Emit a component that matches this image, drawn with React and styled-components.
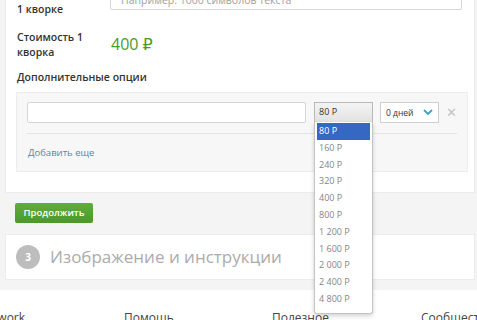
import React from 'react'
import styled, { createGlobalStyle } from 'styled-components'

const GlobalStyle = createGlobalStyle`
  html, body {
    margin: 0;
    padding: 0;
    background: #f4f4f4;
    font-family: "Open Sans", "DejaVu Sans", sans-serif;
    overflow: hidden;
  }
`

const Page = styled.div`
  width: 477px;
  height: 320px;
  overflow: hidden;
`

const Card = styled.section`
  background: #ffffff;
  margin: 0 2px 0 5px;
  border: 1px solid #ececec;
  padding: ${p => p.pad || '0 6px 20px 10px'};
  margin-top: ${p => p.top || 0}px;
`

const Row = styled.div`
  display: grid;
  grid-template-columns: 94px 1fr;
  align-items: start;
  margin-top: ${p => p.top || 0}px;
  padding-right: 6px;
`

const Label = styled.div`
  font-size: 10.5px;
  line-height: 15px;
  font-weight: 600;
  color: #333;
  padding-left: 1px;
`

const TextField = styled.input`
  box-sizing: border-box;
  height: ${p => p.h || 26}px;
  width: 100%;
  border: 1px solid #d6d6d6;
  border-radius: 2px;
  background: #fff;
  font-family: inherit;
  font-size: 10.5px;
  padding: 0 10px;
  margin-top: ${p => p.mt || 0}px;
  &::placeholder { color: #a0a0a0; }
`

const Price = styled.div`
  font-size: 16px;
  line-height: 20px;
  color: #4a9a2a;
  padding-top: 4px;
  padding-left: 1px;
`

const SectionTitle = styled(Label)`
  margin-top: 10px;
`

const OptionsBox = styled.div`
  margin-top: 7px;
  background: #f7f7f7;
  border: 1px solid #ececec;
  padding: 9px 10px 11px 10px;
`

const OptionLine = styled.div`
  display: flex;
  align-items: flex-start;
  gap: 8px;
  padding-bottom: 10px;
  border-bottom: 1px solid #e4e4e4;
`

const NameField = styled(TextField)`
  width: 279px;
  flex: none;
`

const SelectWrap = styled.div`
  position: relative;
  flex: none;
`

const PriceSelect = styled.div`
  box-sizing: border-box;
  width: 59px;
  height: 20px;
  border: 1px solid #b9b9b9;
  border-bottom: none;
  background: linear-gradient(#f4f4f4, #e2e2e2);
  font-size: 9px;
  line-height: 18px;
  padding-left: 4px;
  color: #333;
`

const DropList = styled.ul`
  position: absolute;
  top: 20px;
  left: 0;
  box-sizing: border-box;
  width: 59px;
  margin: 0;
  padding: 1px 2px 5px;
  list-style: none;
  background: #fff;
  border: 1px solid #c4c4c4;
  border-top: none;
  border-radius: 0 0 3px 3px;
  box-shadow: 0 2px 4px rgba(0, 0, 0, 0.18);
  z-index: 5;
`

const DropItem = styled.li`
  height: 16.8px;
  line-height: 16.8px;
  font-size: 9px;
  padding-left: 2px;
  color: ${p => (p.active ? '#fff' : '#858585')};
  background: ${p => (p.active ? '#3468c2' : 'transparent')};
`

const DaysSelect = styled.div`
  box-sizing: border-box;
  width: 60px;
  height: 21px;
  margin-left: -1px;
  border: 1px solid #cfcfcf;
  background: #fff;
  display: flex;
  align-items: center;
  justify-content: space-between;
  padding: 0 5px 0 5px;
  font-size: 8.5px;
  color: #333;
`

const Remove = styled.span`
  font-size: 13px;
  line-height: 21px;
  color: #c2c2c2;
  margin-left: -1px;
`

const AddMore = styled.a`
  display: block;
  margin-top: 12px;
  font-size: 9.5px;
  line-height: 14px;
  color: #5a84a6;
  padding-left: 1px;
`

const Actions = styled.div`
  padding: 6px 0 11px 15px;
`

const Button = styled.button`
  width: 78px;
  height: 20px;
  border: none;
  border-radius: 2px;
  background: linear-gradient(#62ac3c, #4b982b);
  color: #fff;
  font-family: inherit;
  font-size: 9.5px;
  font-weight: 600;
  padding: 0;
`

const StepHead = styled.div`
  display: flex;
  align-items: center;
  gap: 10px;
  height: 44px;
`

const StepNum = styled.span`
  width: 24px;
  height: 24px;
  border-radius: 50%;
  background: #bdbdbd;
  color: #fff;
  font-size: 10px;
  font-weight: 700;
  display: flex;
  align-items: center;
  justify-content: center;
`

const StepTitle = styled.h2`
  margin: 0;
  font-size: 17px;
  font-weight: 400;
  color: #ababab;
`

const Footer = styled.footer`
  margin-top: 10px;
  background: #fff;
  height: 40px;
  display: grid;
  grid-template-columns: 134px 148px 149px 120px;
  margin-left: -10px;
  padding-top: 20px;
  box-sizing: border-box;
`

const FooterLink = styled.span`
  font-size: 12px;
  line-height: 16px;
  color: #444;
  white-space: nowrap;
`

const Chevron = () => (
  <svg width="10" height="7" viewBox="0 0 10 7">
    <path d="M1 1l4 4 4-4" fill="none" stroke="#3aa3c6" strokeWidth="1.8" />
  </svg>
)

const prices = ['80 Р', '160 Р', '240 Р', '320 Р', '400 Р', '800 Р', '1 200 Р', '1 600 Р', '2 000 Р', '2 400 Р', '4 800 Р']

function App() {
  return (
    <Page>
      <GlobalStyle />
      <Card top={-21} pad="7px 6px 20px 10px">
        <Row>
          <Label>Объём в<br />1 кворке</Label>
          <TextField h={21} mt={2} placeholder="Например: 1000 символов текста" />
        </Row>
        <Row top={13}>
          <Label>Стоимость 1<br />кворка</Label>
          <Price>400 ₽</Price>
        </Row>
        <SectionTitle>Дополнительные опции</SectionTitle>
        <OptionsBox>
          <OptionLine>
            <NameField h={21} />
            <SelectWrap>
              <PriceSelect>80 Р</PriceSelect>
              <DropList>
                {prices.map((p, i) => (
                  <DropItem key={p} active={i === 0}>{p}</DropItem>
                ))}
              </DropList>
            </SelectWrap>
            <DaysSelect>
              0 дней
              <Chevron />
            </DaysSelect>
            <Remove>✕</Remove>
          </OptionLine>
          <AddMore>Добавить еще</AddMore>
        </OptionsBox>
      </Card>
      <Actions>
        <Button>Продолжить</Button>
      </Actions>
      <Card pad="0 10px">
        <StepHead>
          <StepNum>3</StepNum>
          <StepTitle>Изображение и инструкции</StepTitle>
        </StepHead>
      </Card>
      <Footer>
        <FooterLink>Kwork</FooterLink>
        <FooterLink>Помощь</FooterLink>
        <FooterLink>Полезное</FooterLink>
        <FooterLink>Сообщество</FooterLink>
      </Footer>
    </Page>
  )
}

export default App
